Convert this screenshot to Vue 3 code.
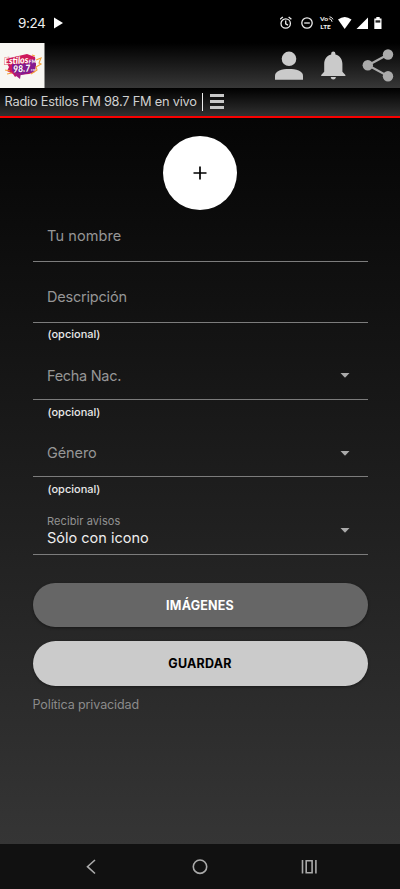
<script setup>
const fields = [
  { label: 'Tu nombre', key: 'name' },
  { label: 'Descripción', key: 'desc', hint: '(opcional)' },
  { label: 'Fecha Nac.', key: 'birth', hint: '(opcional)', select: true },
  { label: 'Género', key: 'gender', hint: '(opcional)', select: true },
  { label: 'Recibir avisos', key: 'notify', value: 'Sólo con icono', select: true },
]
</script>

<template>
  <div class="screen">
    <div class="status">
      <span class="time">9:24</span>
      <svg class="play" width="9" height="12" viewBox="0 0 9 12"><path d="M0 .5 9 6 0 11.500z" fill="#fff" /></svg>
      <svg class="system" width="104" height="16" viewBox="0 0 104 16" fill="none" stroke="#eee" stroke-width="1.300">
        <circle cx="5.700" cy="8.500" r="4.700" /><path d="M5.700 5.500v3.300l2.300 1.300M0 4.300l2.800-2.400M11.400 4.300l-2.800-2.400" />
        <circle cx="27" cy="8" r="5.200" /><path d="M24.200 8h5.600" />
        <text class="volte" x="40" y="6.200" textLength="8" lengthAdjust="spacingAndGlyphs">Vo</text>
        <path d="M48.800 3.600q3 .2 3.300 3.200M49.500 1.800q2.500.1 3.500 2.600" stroke-width="1" />
        <text class="volte" x="40.300" y="14" textLength="10.500" lengthAdjust="spacingAndGlyphs">LTE</text>
        <path d="M58 4.500Q64.700-.5 71.500 4.500L64.700 14z" fill="#fff" stroke="none" />
        <path d="M76.500 14 88 2.500V14z" fill="#fff" stroke="none" />
        <path d="M94.300 3.500h2V2h3.400v1.500h1.800V14h-7.200z" fill="#fff" stroke="none" /><path d="M95.500 5.300h4.800v2.300h-4.800z" fill="#222" stroke="none" />
      </svg>
    </div>

    <header class="header">
      <svg class="logo" width="45" height="45" viewBox="0 0 45 45">
        <rect width="44.500" height="45" fill="#f8f7f3" />
        <path d="M5 16 14 14 27 11l8 3 1 7-1 8-6 2-11 1-3 2-2-3-6-3 2-4-3-5z" fill="#cd185d" />
        <path d="M12 21 35 16l1 6-2 7-13 3-9-4z" fill="#851a91" />
        <path d="m36 17 5-2-2 5 2 1-5 3 1 3-6 4M5 27l5 1M7 31l5-1M32 12l3 1" stroke="#f4a13a" stroke-width="1.100" fill="none" />
        <path d="m14 30h7l-1 6-5-4" fill="#a21b83" />
        <g transform="rotate(-4 20 20)" class="brand">
          <text x="4.500" y="20.500" textLength="24" lengthAdjust="spacingAndGlyphs" class="brand-name">Estilos</text>
          <text x="28.800" y="21" textLength="7.500" lengthAdjust="spacingAndGlyphs" class="brand-fm">FM</text>
          <text x="12.500" y="29" textLength="17.500" lengthAdjust="spacingAndGlyphs" class="brand-number">98.7</text>
          <text x="30.500" y="29" class="brand-unit">FM</text>
        </g>
      </svg>
      <svg class="actions" width="130" height="45" viewBox="0 0 130 45" fill="#cacaca">
        <circle cx="19" cy="15.800" r="7.300" />
        <path d="M5 36.800v-4C5 27.800 12 26 19 26s14 1.800 14 6.800v4z" />
        <path d="M61.200 10.600a2.100 2.100 0 0 1 4.200 0v1c4.600 1.100 7 5 7 9.400v7.700l3 3.200v1.200H51.200v-1.200l3-3.200V21c0-4.400 2.400-8.300 7-9.400zM60.600 34.100H66q-.5 2.500-2.700 2.500t-2.700-2.500z" />
        <g fill="#aaa"><path d="M118 11.500 98 22.200l20 10.900" fill="none" stroke="#aaa" stroke-width="2.200" /><circle cx="118" cy="11.500" r="5.200" /><circle cx="97.800" cy="22.300" r="5.200" /><circle cx="118" cy="33.200" r="5.200" /></g>
      </svg>
    </header>

    <div class="title-bar">
      <span class="title">Radio Estilos FM 98.7 FM en vivo</span>
      <span class="divider"></span>
      <span class="menu"><i></i><i></i><i></i></span>
    </div>

    <main class="content">
      <button class="avatar" aria-label="Añadir foto">
        <svg width="14" height="14" viewBox="0 0 14 14"><path d="M7 .5v13M.5 7h13" stroke="#000" stroke-width="1.700" /></svg>
      </button>
      <form class="form">
        <div v-for="field in fields" :key="field.key" class="group" :class="field.key">
          <div class="field">
            <div class="texts">
              <span :class="field.value ? 'small-label' : 'label'">{{ field.label }}</span>
              <span v-if="field.value" class="value">{{ field.value }}</span>
            </div>
            <svg v-if="field.select" class="arrow" width="10" height="5" viewBox="0 0 10 5"><path d="M.5 0h9L5 4.800z" fill="#aaa" /></svg>
          </div>
          <div v-if="field.hint" class="hint">{{ field.hint }}</div>
        </div>
        <button type="button" class="button images"><span>IMÁGENES</span></button>
        <button type="button" class="button save"><span>GUARDAR</span></button>
        <span class="privacy">Política privacidad</span>
      </form>
    </main>

    <nav class="nav">
      <svg width="400" height="45" viewBox="0 0 400 45" fill="none" stroke="#aaa" stroke-width="1.600">
        <path d="m95 16-7.500 6.700L95 29.500" />
        <circle cx="200" cy="22.700" r="6.700" />
        <path d="M302.500 16v13.500M315.900 16v13.500M306.200 16.700h5.900v12h-5.900z" />
      </svg>
    </nav>
  </div>
</template>

<style>
body { background: #000; }
</style>

<style scoped>
.screen { width: 400px; height: 889px; display: flex; flex-direction: column; overflow: hidden; font-family: Inter, "Noto Sans", sans-serif; background: #000; }
.status { height: 43px; display: flex; align-items: center; padding: 3px 16px 0 18px; box-sizing: border-box; color: #eee; }
.time { font-size: 13.500px; line-height: 18px; letter-spacing: -.4px; width: 36px; }
.system { margin-left: auto; }
.volte { font: 900 6.300px Lato, sans-serif; fill: #eee; stroke: none; }
.header { height: 45px; display: flex; justify-content: space-between; background: linear-gradient(#000, #373737); }
.brand { font-family: Lato, sans-serif; font-weight: 900; font-style: italic; fill: #fff; }
.brand-name { font-size: 9.500px; stroke: #d52343; stroke-width: .8px; paint-order: stroke; }
.brand-fm { font-size: 5px; }
.brand-number { font-size: 9.500px; stroke: #701573; stroke-width: .8px; paint-order: stroke; }
.brand-unit { font-size: 3px; }
.title-bar { height: 30px; box-sizing: border-box; display: flex; align-items: center; padding-left: 4.500px; border-bottom: 2px solid #f80000; background: linear-gradient(#000, #303030); }
.title { width: 197.500px; font-size: 12.800px; line-height: 18px; letter-spacing: -.22px; color: #d0d0d0; white-space: nowrap; }
.divider { width: 1px; height: 18px; background: #eee; }
.menu { width: 14px; height: 15px; margin: -1px 0 0 7px; display: flex; flex-direction: column; justify-content: space-between; }
.menu i { height: 3px; background: #c8c8c8; }
.content { height: 726px; box-sizing: border-box; padding: 18px 32.500px 0; display: flex; flex-direction: column; align-items: center; background: linear-gradient(#050505, #353535); }
.avatar { width: 74px; height: 74px; flex: none; padding: 0; display: grid; place-items: center; border: 0; border-radius: 50%; background: #fff; }
.form { width: 335px; display: flex; flex-direction: column; }
.group { box-sizing: border-box; height: 77.400px; padding-top: 12px; }
.field { height: 49px; box-sizing: border-box; display: flex; align-items: center; justify-content: space-between; padding: 2px 17.500px 0 14.500px; border-bottom: 1px solid #7c7c7c; }
.name { height: 52px; padding-top: 0; }
.desc { height: 76.800px; padding-top: 9px; }
.name .field, .desc .field { height: 52px; padding-top: 0; }
.texts { display: flex; flex-direction: column; }
.label { font-size: 14.500px; line-height: 20px; letter-spacing: -.1px; color: #969696; }
.name .label { letter-spacing: .1px; }
.desc .label { letter-spacing: -.2px; }
.birth .label { letter-spacing: -.3px; }
.small-label { font-size: 11px; line-height: 15px; letter-spacing: .1px; color: #929292; }
.value { font-size: 14.500px; line-height: 18px; color: #eee; }
.hint { padding: 5px 0 0 15px; font-size: 11px; line-height: 15px; color: #e8e8e8; font-weight: 500; }
.desc .hint { padding-top: 4px; }
.notify { height: 89.400px; }
.button { height: 44.300px; border: 0; padding: 0; border-radius: 23px; font-family: inherit; font-size: 12.500px; font-weight: 700; letter-spacing: .2px; box-shadow: 0 1px 3px #0006; }
.images { background: #666; color: #fff; }
.save { margin-top: 14.200px; background: #cbcbcb; color: #000; }
.privacy { margin-top: 10px; font-size: 12.500px; line-height: 18px; letter-spacing: -.1px; color: #8b8b8b; }
.nav { height: 45px; background: #111; }
</style>
